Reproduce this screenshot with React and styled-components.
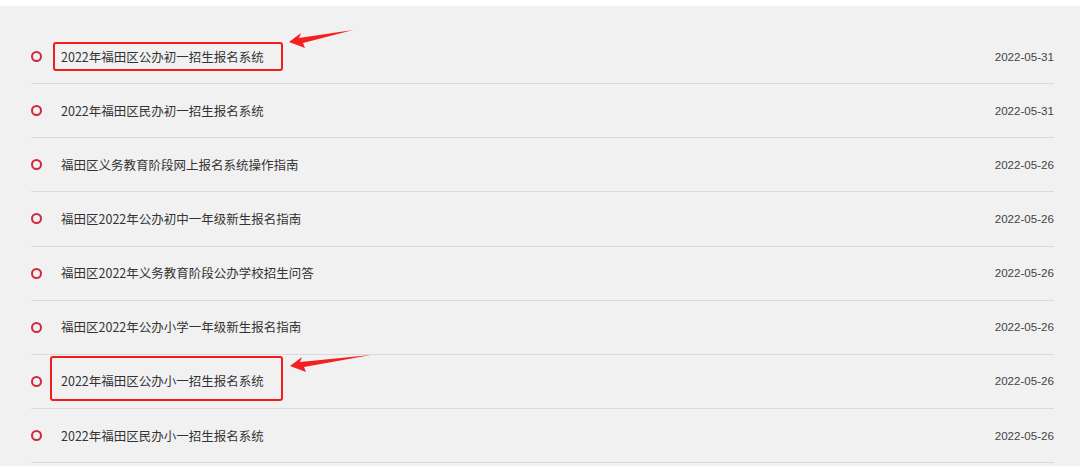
import React from "react";
import styled, { createGlobalStyle } from "styled-components";

const GlobalStyle = createGlobalStyle`
  html, body {
    margin: 0;
    padding: 0;
    background: #fff;
  }
  body {
    font-family: "Noto Sans CJK SC", "Noto Sans", sans-serif;
  }
`;

const Page = styled.div`
  position: relative;
  width: 1080px;
  height: 466px;
  padding-top: 6px;
  box-sizing: border-box;
  overflow: hidden;
`;

const Panel = styled.div`
  background: #f1f1f1;
  height: 100%;
  padding: 24px 26px 0 31px;
  box-sizing: border-box;
`;

const List = styled.ul`
  list-style: none;
  margin: 0;
  padding: 0;
`;

const Row = styled.li`
  display: flex;
  align-items: center;
  height: 53.15px;
  border-bottom: 1px solid #dadada;
`;

const Dot = styled.span`
  box-sizing: border-box;
  width: 11px;
  height: 11px;
  border: 2.5px solid #d0283c;
  border-radius: 50%;
  flex-shrink: 0;
  margin: 0 19px 0 0;
`;

const Title = styled.span`
  flex: 1;
  font-size: 12.5px;
  color: #333;
  white-space: nowrap;
  margin-top: -1px;
`;

const Date = styled.span`
  font-family: "Liberation Sans", Arial, sans-serif;
  font-size: 11.6px;
  color: #444;
  margin-top: -1px;
`;

const Overlay = styled.svg`
  position: absolute;
  left: 0;
  top: 0;
  pointer-events: none;
`;

const items = [
  ["2022年福田区公办初一招生报名系统", "2022-05-31"],
  ["2022年福田区民办初一招生报名系统", "2022-05-31"],
  ["福田区义务教育阶段网上报名系统操作指南", "2022-05-26"],
  ["福田区2022年公办初中一年级新生报名指南", "2022-05-26"],
  ["福田区2022年义务教育阶段公办学校招生问答", "2022-05-26"],
  ["福田区2022年公办小学一年级新生报名指南", "2022-05-26"],
  ["2022年福田区公办小一招生报名系统", "2022-05-26"],
  ["2022年福田区民办小一招生报名系统", "2022-05-26"],
];

const App = () => {
  return (
    <Page>
      <GlobalStyle />
      <Panel>
        <List>
          {items.map(([title, date]) => (
            <Row key={title}>
              <Dot />
              <Title>{title}</Title>
              <Date>{date}</Date>
            </Row>
          ))}
        </List>
      </Panel>

      {/* red annotations drawn over the list */}
      <Overlay width="1080" height="466">
        <rect x="54" y="43" width="228" height="27" rx="2" fill="none" stroke="#f21c1c" strokeWidth="2" />
        <polygon points="289,42 301,33 299,38 353,30 303,43 305,48" fill="#f51f1f" />
        <rect x="51" y="357" width="231" height="43" rx="2" fill="none" stroke="#f21c1c" strokeWidth="2" />
        <polygon points="290,366 302,357 300,362 371,355 304,367 306,372" fill="#f51f1f" />
      </Overlay>
    </Page>
  );
};

export default App;
